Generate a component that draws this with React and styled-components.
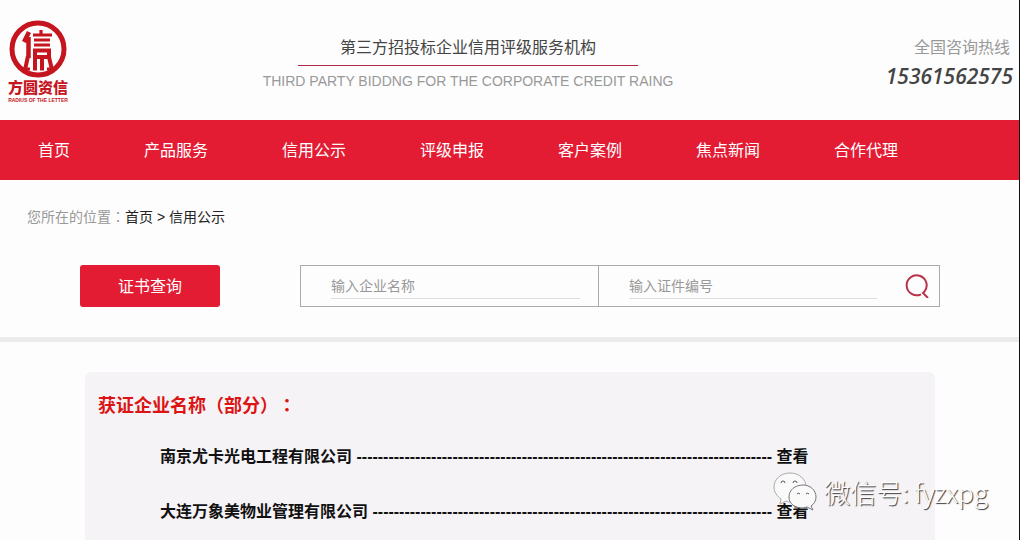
import React from 'react'
import styled, { createGlobalStyle } from 'styled-components'

const GlobalStyle = createGlobalStyle`
* {
  box-sizing: border-box;
}
body {
  margin: 0;
  background: #fdfdfd;
  font-family: "Liberation Sans", "Noto Sans CJK SC", sans-serif;
  color: #222;
  text-spacing-trim: space-all;
}
`

const Page = styled.div`
min-height: 100vh;
display: flex;
flex-direction: column;
border-right: 1px solid #111;
`

const Header = styled.header`
height: 120px;
display: grid;
grid-template-columns: 3fr auto 4fr;
align-items: center;
padding: 6px 6px 0 8px;
`

const Logo = styled.a`
width: 60px;
display: flex;
flex-direction: column;
align-items: center;
color: #c5161f;
text-decoration: none;
padding-bottom: 4px;
`

const LogoName = styled.span`
font-size: 15px;
line-height: 20px;
font-weight: 900;
white-space: nowrap;
`

const LogoTag = styled.span`
font-size: 5px;
line-height: 4px;
font-weight: 700;
white-space: nowrap;
`

const Slogan = styled.div`
display: flex;
flex-direction: column;
align-items: center;
`

const SloganTitle = styled.p`
margin: 0;
padding: 0 42px;
border-bottom: 1px solid #b02a48;
color: #444;
font-size: 16px;
line-height: 34px;
`

const SloganText = styled.p`
margin: 0;
color: #999;
font-size: 14px;
line-height: 30px;
white-space: nowrap;
`

const Hotline = styled.div`
display: flex;
flex-direction: column;
align-items: flex-end;
padding-bottom: 2px;
`

const HotlineLabel = styled.span`
padding-right: 3px;
color: #999;
font-size: 16px;
line-height: 28px;
`

const Phone = styled.span`
color: #444;
font-family: "Open Sans", "Noto Sans", sans-serif;
font-size: 21px;
font-style: italic;
font-weight: 600;
line-height: 28px;
`

const Nav = styled.nav`
height: 60px;
display: flex;
align-items: center;
gap: 74px;
padding: 2px 38px 0;
background: #e31c33;
`

const NavLink = styled.a`
color: #fff;
font-size: 16px;
line-height: 24px;
text-decoration: none;
white-space: nowrap;
`

const Breadcrumb = styled.div`
padding: 26px 27px 0;
color: #999;
font-size: 14px;
line-height: 22px;
`

const Crumb = styled.a`
color: #222;
text-decoration: none;
`

/* full-width marks that sit in the middle of their cell */
const Mark = styled.span`
font-family: "Noto Sans CJK TC", sans-serif;
line-height: 1;
`

const SearchBar = styled.form`
display: flex;
gap: 80px;
padding: 37px 79px 30px 80px;
border-bottom: 5px solid #ececec;
`

const QueryButton = styled.button`
width: 140px;
height: 42px;
padding: 0 0 2px;
border: 0;
border-radius: 3px;
background: #e31c33;
color: #fff;
font-family: inherit;
font-size: 16px;
`

const Fields = styled.div`
flex: 1;
height: 42px;
display: grid;
grid-template-columns: minmax(0, 297fr) minmax(0, 341fr);
border: 1px solid #aaa;
`

const Field = styled.div`
display: flex;
align-items: center;
padding: 0 ${props => props.$end}px 0 30px;
& + & {
  border-left: 1px solid #aaa;
}
`

const Input = styled.input`
flex: 1;
min-width: 0;
height: 26px;
padding: 0;
border: 0;
border-bottom: 1px solid #ddd;
outline: none;
background: transparent;
font-family: inherit;
font-size: 14px;
&::placeholder {
  color: #999;
  opacity: 1;
}
`

const SearchButton = styled.button`
width: 24px;
height: 24px;
margin-left: 28px;
padding: 0;
border: 0;
background: none;
svg {
  display: block;
}
`

const Panel = styled.main`
flex: 1;
margin: 30px 84px 0 85px;
padding: 19px 13px 0;
border-radius: 6px 6px 0 0;
background: #f5f3f6;
`

const PanelTitle = styled.h2`
margin: 0;
color: #dc1414;
font-size: 18px;
line-height: 30px;
`

const CompanyList = styled.ul`
margin: 0;
padding: 8px 0 0 62px;
list-style: none;
`

const CompanyItem = styled.li`
color: #111;
font-size: 16px;
font-weight: 700;
line-height: 55px;
white-space: nowrap;
`

const ViewLink = styled.a`
color: inherit;
text-decoration: none;
`

const Watermark = styled.div`
position: absolute;
right: 32px;
bottom: 28px;
display: flex;
align-items: center;
gap: 7px;
color: #fff;
font-family: "Noto Sans CJK SC", sans-serif;
font-size: 26px;
font-weight: 300;
line-height: 38px;
text-shadow: 1px 1px 1px #333;
`

const menu = ['首页', '产品服务', '信用公示', '评级申报', '客户案例', '焦点新闻', '合作代理']

const companies = [
  { name: '南京尤卡光电工程有限公司', dashes: 78 },
  { name: '大连万象美物业管理有限公司', dashes: 75 },
]

const LogoMark = () => (
  <svg width="58" height="58" viewBox="0 0 58 58" aria-hidden="true">
    <circle cx="29" cy="29" r="26" fill="none" stroke="#c5161f" strokeWidth="5" />
    <g fill="none" stroke="#c5161f">
      <path d="M20 12 L15 22 M19.500 17 V38" strokeWidth="4.500" />
      <path d="M32 10 V15 M24 15 H43 M25 20 H41 M25 25 H41" strokeWidth="3.200" />
      <path d="M26 30.500 H40 V37 H26 Z" strokeWidth="4" />
      <path d="M19 36 L16 50 M26 37 V50 M33 37 V50 M40 37 L43 50" strokeWidth="4" />
      <path d="M14 49 H21 M24 49 H28 M31 49 H35 M38 49 H45" strokeWidth="3" />
    </g>
  </svg>
)

const SearchIcon = () => (
  <svg width="24" height="24" viewBox="0 0 24 24" fill="none" stroke="#b8324a" strokeWidth="2">
    <path d="M16 20.300 A10 10 0 1 1 19.500 17.500 L18 19 L23 24" />
  </svg>
)

const WechatIcon = () => (
  <svg width="44" height="40" viewBox="0 0 44 40" fill="#fafafa" stroke="#aaa" strokeWidth="1" aria-hidden="true">
    <path d="M17 1 C8 1 1 7 1 15 C1 20 4 24 8 27 L7 32 L13 29 C15 30 16 30 18 30 C26 30 33 23 33 15 C33 7 26 1 17 1 Z" />
    <path d="M30 13 C22 13 16 18 16 25 C16 32 22 36 30 36 L34 35 L40 38 L38 34 C41 32 43 29 43 25 C43 18 37 13 30 13 Z" stroke="#777" />
    <path d="M8 11 A2 2 0 0 1 12 11 M20 11 A2 2 0 0 1 24 11 M24 22 A2 2 0 0 1 27 22 M33 22 A2 2 0 0 1 36 22" fill="none" stroke="#555" />
  </svg>
)

const App = () => {
  return (
    <Page>
      <GlobalStyle />
      <Header>
        <Logo href="#">
          <LogoMark />
          <LogoName>方圆资信</LogoName>
          <LogoTag>RADIUS OF THE LETTER</LogoTag>
        </Logo>
        <Slogan>
          <SloganTitle>第三方招投标企业信用评级服务机构</SloganTitle>
          <SloganText>THIRD PARTY BIDDNG FOR THE CORPORATE CREDIT RAING</SloganText>
        </Slogan>
        <Hotline>
          <HotlineLabel>全国咨询热线</HotlineLabel>
          <Phone>15361562575</Phone>
        </Hotline>
      </Header>
      <Nav>
        {menu.map(item => (
          <NavLink href="#" key={item}>{item}</NavLink>
        ))}
      </Nav>
      <Breadcrumb>
        您所在的位置<Mark>：</Mark><Crumb href="#">首页 &gt; </Crumb><Crumb href="#">信用公示</Crumb>
      </Breadcrumb>
      <SearchBar onSubmit={e => e.preventDefault()}>
        <QueryButton type="button">证书查询</QueryButton>
        <Fields>
          <Field $end={18}>
            <Input aria-label="企业名称" placeholder="输入企业名称" />
          </Field>
          <Field $end={10}>
            <Input aria-label="证件编号" placeholder="输入证件编号" />
            <SearchButton type="submit" aria-label="查询">
              <SearchIcon />
            </SearchButton>
          </Field>
        </Fields>
      </SearchBar>
      <Panel>
        <PanelTitle>获证企业名称<Mark>（</Mark>部分<Mark>）：</Mark></PanelTitle>
        <CompanyList>
          {companies.map(company => (
            <CompanyItem key={company.name}>
              {company.name} {'-'.repeat(company.dashes)} <ViewLink href="#">查看</ViewLink>
            </CompanyItem>
          ))}
        </CompanyList>
      </Panel>
      <Watermark>
        <WechatIcon />
        <span>微信号: fyzxpg</span>
      </Watermark>
    </Page>
  )
}

export default App
